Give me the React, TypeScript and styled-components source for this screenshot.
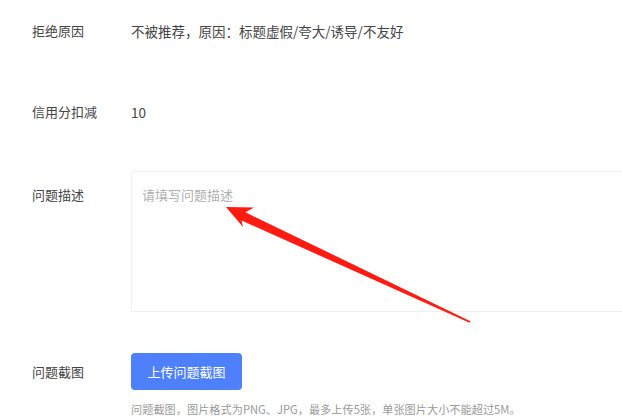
import React from "react";
import styled, { createGlobalStyle } from "styled-components";

const Global = createGlobalStyle`
  html, body { margin: 0; padding: 0; background: #fff; overflow: hidden; }
  body { font-family: "Noto Sans CJK SC", "Liberation Sans", sans-serif; }
`;

const Page = styled.div`
  position: relative;
  width: 622px;
  height: 420px;
  overflow: hidden;
  padding: 21px 0 0 32px;
  box-sizing: border-box;
`;

const Row = styled.div<{ $gap: number }>`
  display: flex;
  align-items: flex-start;
  margin-top: ${(p) => p.$gap}px;
`;

const Label = styled.div<{ $pad?: number }>`
  width: 99px;
  flex: none;
  font-size: 13px;
  line-height: 20px;
  color: #444;
  padding-top: ${(p) => p.$pad ?? 0}px;
`;

const Value = styled.div`
  font-size: 13.5px;
  line-height: 20px;
  color: #444;
  white-space: nowrap;
`;

const TextArea = styled.div`
  width: 560px;
  height: 141px;
  flex: none;
  box-sizing: border-box;
  border: 1px solid #f0f0f0;
  border-radius: 2px;
  padding: 13px 10px;
  font-size: 13px;
  line-height: 20px;
  color: #b0b0b0;
`;

const UploadCol = styled.div`
  display: flex;
  flex-direction: column;
  align-items: flex-start;
`;

const Button = styled.button`
  width: 111px;
  height: 37px;
  border: none;
  border-radius: 4px;
  background: #4d80fa;
  color: #fff;
  font-family: inherit;
  font-size: 13px;
  padding: 0;
`;

const Hint = styled.div`
  margin-top: 11px;
  font-size: 11.2px;
  line-height: 16px;
  color: #9a9a9a;
  white-space: nowrap;
`;

const Arrow = styled.svg`
  position: absolute;
  left: 0;
  top: 0;
  pointer-events: none;
`;

export default function App() {
  return (
    <>
      <Global />
      <Page>
        <Row $gap={0}>
          <Label>拒绝原因</Label>
          <Value>不被推荐，原因：标题虚假/夸大/诱导/不友好</Value>
        </Row>
        <Row $gap={61}>
          <Label>信用分扣减</Label>
          <Value>10</Value>
        </Row>
        <Row $gap={49}>
          <Label $pad={14}>问题描述</Label>
          <TextArea>请填写问题描述</TextArea>
        </Row>
        <Row $gap={41}>
          <Label $pad={9}>问题截图</Label>
          <UploadCol>
            <Button>上传问题截图</Button>
            <Hint>问题截图，图片格式为PNG、JPG，最多上传5张，单张图片大小不能超过5M。</Hint>
          </UploadCol>
        </Row>
        <Arrow width="622" height="420" viewBox="0 0 622 420">
          <polygon
            points="226,207 254,207.5 245.5,212.3 470.4,321.2 469.6,322.8 241.5,220.5 243,227"
            fill="#ff1a12"
          />
        </Arrow>
      </Page>
    </>
  );
}
